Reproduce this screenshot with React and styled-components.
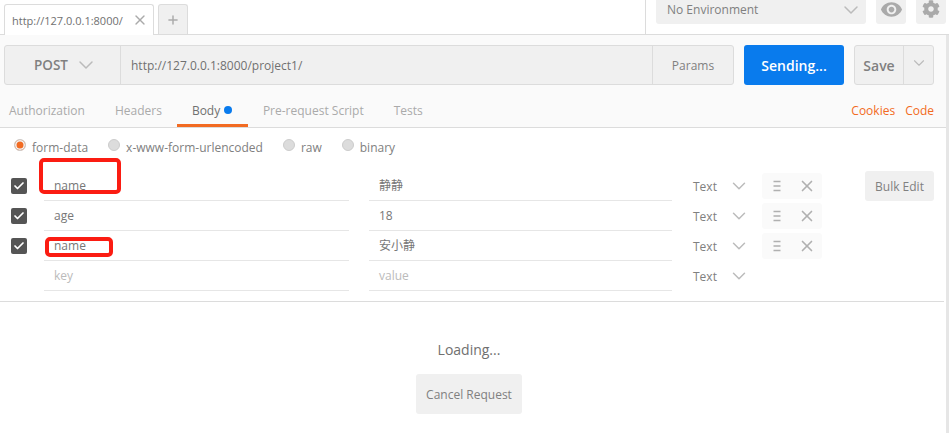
import React from "react";
import styled, { createGlobalStyle } from "styled-components";
import { ChevronDown, X, Plus, Check } from "lucide-react";
import { FaCog } from "react-icons/fa";
import { MdRemoveRedEye } from "react-icons/md";

const Global = createGlobalStyle`
  html, body { margin: 0; padding: 0; background: #fff; }
  body { font-family: "Open Sans", "Noto Sans CJK SC", sans-serif; color: #808080; overflow: hidden; }
  * { box-sizing: border-box; }
`;

const Page = styled.div`
  width: 949px;
  height: 433px;
  position: relative;
  overflow: hidden;
  background: #fff;
`;
const TopBar = styled.div`
  height: 35px;
  display: flex;
  border-bottom: 1px solid #dcdcdc;
  padding-left: 4px;
`;
const Tab = styled.div`
  width: 150px;
  height: 31px;
  margin-top: 4px;
  background: #fff;
  border: 1px solid #dcdcdc;
  border-bottom: 0;
  border-radius: 3px 3px 0 0;
  display: flex;
  align-items: center;
  justify-content: space-between;
  padding: 0 5px 0 7px;
  font-size: 11px;
  color: #707070;
  margin-bottom: -1px;
  z-index: 1;
`;
const AddTab = styled.div`
  width: 30px;
  height: 30px;
  margin: 4px 0 0 4px;
  background: #f0f0f0;
  border: 1px solid #dcdcdc;
  border-bottom: 0;
  border-radius: 3px 3px 0 0;
  display: flex;
  align-items: center;
  justify-content: center;
  color: #aaa;
`;
const EnvArea = styled.div`
  margin-left: auto;
  width: 304px;
  height: 34px;
  border-left: 1px solid #dcdcdc;
  display: flex;
  align-items: flex-start;
  padding-left: 10px;
  gap: 10px;
`;
const EnvSelect = styled.div`
  width: 210px;
  height: 24px;
  background: #f0f0f0;
  border-radius: 0 0 3px 3px;
  display: flex;
  align-items: center;
  justify-content: space-between;
  padding: 0 3px 5px 11px;
  font-size: 12px;
  color: #808080;
`;
const IconBox = styled.div`
  width: 30px;
  height: 24px;
  background: #f0f0f0;
  border-radius: 0 0 3px 3px;
  display: flex;
  align-items: center;
  justify-content: center;
  padding-bottom: 6px;
  color: #aaa;
`;
const Builder = styled.div`
  width: 946px;
  height: 93px;
  background: #fafafa;
  border-bottom: 1px solid #dcdcdc;
`;
const UrlRow = styled.div`
  display: flex;
  padding: 10px 0 0 4px;
  height: 52px;
`;
const UrlGroup = styled.div`
  width: 730px;
  height: 40px;
  display: flex;
  background: #f0f0f0;
  border: 1px solid #dcdcdc;
  border-radius: 3px;
`;
const Method = styled.div`
  width: 116px;
  border-right: 1px solid #dcdcdc;
  display: flex;
  align-items: center;
  gap: 6px;
  font-size: 13.5px;
  font-weight: 600;
  color: #808080;
  padding-left: 29px;
`;
const UrlInput = styled.div`
  flex: 1;
  padding-left: 10px;
  display: flex;
  align-items: center;
  font-size: 12px;
  color: #707070;
`;
const Params = styled.div`
  width: 81px;
  border-left: 1px solid #dcdcdc;
  display: flex;
  align-items: center;
  justify-content: center;
  font-size: 12px;
  color: #808080;
`;
const Send = styled.div`
  width: 100px;
  height: 40px;
  margin-left: 10px;
  background: #097bed;
  border-radius: 3px;
  color: #fff;
  font-size: 14px;
  font-weight: 600;
  display: flex;
  align-items: center;
  justify-content: center;
`;
const SaveGroup = styled.div`
  width: 80px;
  height: 40px;
  margin-left: 10px;
  display: flex;
  background: #f0f0f0;
  border: 1px solid #dcdcdc;
  border-radius: 3px;
`;
const Save = styled.div`
  width: 49px;
  border-right: 1px solid #dcdcdc;
  display: flex;
  align-items: center;
  justify-content: center;
  font-size: 14px;
  font-weight: 600;
  color: #808080;
`;
const SaveArrow = styled.div`
  flex: 1;
  display: flex;
  justify-content: center;
  padding-top: 8px;
  color: #bbb;
`;
const TabsRow = styled.div`
  height: 40px;
  display: flex;
  padding-left: 9px;
  font-size: 12px;
  position: relative;
`;
const ReqTab = styled.div`
  height: 40px;
  display: flex;
  align-items: center;
  gap: 4px;
  padding-top: 6px;
  margin-right: ${p => p.$gap}px;
  color: ${p => (p.$active ? "#707070" : "#aaa")};
`;
const ActiveTab = styled(ReqTab)`
  width: 71px;
  margin-left: -15px;
  padding-left: 15px;
  border-bottom: 3px solid #f26b22;
  padding-top: 9px;
`;
const Dot = styled.span`
  width: 8px;
  height: 8px;
  border-radius: 50%;
  background: #097bed;
`;
const RightLinks = styled.div`
  margin-left: auto;
  display: flex;
  gap: 10px;
  padding: 6px 12px 0 0;
  align-items: center;
  color: #f26b22;
  font-size: 12px;
`;
const Radios = styled.div`
  display: flex;
  height: 37px;
  padding: 13px 0 0 14px;
  font-size: 12px;
  color: #808080;
`;
const Radio = styled.div`
  display: flex;
  align-items: center;
  gap: 6px;
  margin-right: ${p => p.$gap}px;
  height: 14px;
  line-height: 14px;
`;
const Circle = styled.span`
  width: 12px;
  height: 12px;
  border-radius: 50%;
  margin-top: -6px;
  background: ${p => (p.$on ? "#f26b22" : "#dcdcdc")};
  border: 1px solid #ccc;
  box-shadow: ${p => (p.$on ? "inset 0 0 0 1.5px #f5f5f5" : "none")};
`;
const TableArea = styled.div`
  position: relative;
  height: 137px;
  padding-top: 6px;
  border-bottom: 1px solid #dcdcdc;
  width: 944px;
`;
const Row = styled.div`
  height: 30px;
  display: flex;
  padding-left: 11px;
`;
const CheckCell = styled.div`
  width: 33px;
  padding-top: 7px;
`;
const CheckBox = styled.div`
  width: 16px;
  height: 16px;
  border-radius: 2px;
  background: #555;
  color: #fff;
  display: flex;
  align-items: center;
  justify-content: center;
`;
const Field = styled.div`
  width: ${p => p.$w}px;
  height: 30px;
  margin-right: ${p => p.$mr}px;
  padding: 0 0 1px 10px;
  border-bottom: 1px solid #e6e6e6;
  display: flex;
  align-items: center;
  font-size: 12px;
  color: ${p => (p.$ph ? "#bbb" : "#777")};
`;
const TypeCell = styled.div`
  width: 90px;
  display: flex;
  align-items: center;
  gap: 11px;
  padding: 0 0 0 21px;
  font-size: 12px;
  color: #808080;
`;
const ActionBox = styled.div`
  width: 60px;
  height: 26px;
  margin-top: 2px;
  background: #fafafa;
  border-radius: 3px;
  display: flex;
  align-items: center;
  gap: 16px;
  color: #b0b0b0;
  padding-left: 10px;
`;
const BulkEdit = styled.div`
  position: absolute;
  left: 865px;
  top: 6px;
  width: 69px;
  height: 30px;
  background: #f0f0f0;
  border-radius: 3px;
  display: flex;
  align-items: center;
  justify-content: center;
  font-size: 12px;
  color: #808080;
`;
const Response = styled.div`
  width: 938px;
  display: flex;
  flex-direction: column;
  align-items: center;
  padding-top: 38px;
`;
const Loading = styled.div`
  font-size: 14px;
  color: #707070;
  line-height: 19px;
  height: 34px;
`;
const Cancel = styled.div`
  width: 106px;
  height: 40px;
  background: #f0f0f0;
  border-radius: 3px;
  display: flex;
  align-items: center;
  justify-content: center;
  font-size: 12px;
  color: #808080;
`;
const Annotation = styled.div`
  position: absolute;
  left: ${p => p.$x}px;
  top: ${p => p.$y}px;
  width: ${p => p.$w}px;
  height: ${p => p.$h}px;
  border: 4px solid #fb1c12;
  border-radius: 5px;
`;
const ScrollTrack = styled.div`
  position: absolute;
  right: 0;
  top: 35px;
  bottom: 0;
  width: 3px;
  background: #e6e6e6;
`;

const Lines = () => (
  <svg width="10" height="12" viewBox="0 0 10 12">
    <path d="M1.5 1.5h7M1.5 6h7M1.5 10.5h7" stroke="currentColor" strokeWidth="1.6" />
  </svg>
);

const rows = [
  { key: "name", value: "静静" },
  { key: "age", value: "18" },
  { key: "name", value: "安小静" },
];

export default function App() {
  return (
    <Page>
      <Global />
      <TopBar>
        <Tab>
          <span>http://127.0.0.1:8000/</span>
          <X size={16} color="#aaa" strokeWidth={2} />
        </Tab>
        <AddTab><Plus size={14} strokeWidth={2.5} /></AddTab>
        <EnvArea>
          <EnvSelect>
            No Environment
            <ChevronDown size={24} color="#bbb" strokeWidth={1.5} />
          </EnvSelect>
          <IconBox><MdRemoveRedEye size={23} /></IconBox>
          <IconBox><FaCog size={18} /></IconBox>
        </EnvArea>
      </TopBar>
      <Builder>
        <UrlRow>
          <UrlGroup>
            <Method>
              POST
              <ChevronDown size={24} color="#bbb" strokeWidth={1.5} />
            </Method>
            <UrlInput>http://127.0.0.1:8000/project1/</UrlInput>
            <Params>Params</Params>
          </UrlGroup>
          <Send>Sending...</Send>
          <SaveGroup>
            <Save>Save</Save>
            <SaveArrow><ChevronDown size={18} strokeWidth={1.5} /></SaveArrow>
          </SaveGroup>
        </UrlRow>
        <TabsRow>
          <ReqTab $gap={30}>Authorization</ReqTab>
          <ReqTab $gap={30}>Headers</ReqTab>
          <ActiveTab $active $gap={15}>Body <Dot /></ActiveTab>
          <ReqTab $gap={30}>Pre-request Script</ReqTab>
          <ReqTab $gap={0}>Tests</ReqTab>
          <RightLinks>
            <span>Cookies</span>
            <span>Code</span>
          </RightLinks>
        </TabsRow>
      </Builder>
      <Radios>
        <Radio $gap={20}><Circle $on />form-data</Radio>
        <Radio $gap={20}><Circle />x-www-form-urlencoded</Radio>
        <Radio $gap={20}><Circle />raw</Radio>
        <Radio $gap={0}><Circle />binary</Radio>
      </Radios>
      <TableArea>
        {rows.map((r, i) => (
          <Row key={i}>
            <CheckCell>
              <CheckBox><Check size={12} strokeWidth={3.5} /></CheckBox>
            </CheckCell>
            <Field $w={305} $mr={20}>{r.key}</Field>
            <Field $w={303} $mr={0}>{r.value}</Field>
            <TypeCell>
              Text
              <ChevronDown size={22} color="#bbb" strokeWidth={1.6} />
            </TypeCell>
            <ActionBox>
              <Lines />
              <X size={18} strokeWidth={2.2} />
            </ActionBox>
          </Row>
        ))}
        <Row>
          <CheckCell />
          <Field $w={305} $mr={20} $ph>key</Field>
          <Field $w={303} $mr={0} $ph>value</Field>
          <TypeCell>
            Text
            <ChevronDown size={22} color="#bbb" strokeWidth={1.6} />
          </TypeCell>
        </Row>
        <BulkEdit>Bulk Edit</BulkEdit>
        <Annotation $x={39} $y={-7} $w={82} $h={36} />
        <Annotation $x={45} $y={72} $w={68} $h={20} />
      </TableArea>
      <Response>
        <Loading>Loading...</Loading>
        <Cancel>Cancel Request</Cancel>
      </Response>
      <ScrollTrack />
    </Page>
  );
}
